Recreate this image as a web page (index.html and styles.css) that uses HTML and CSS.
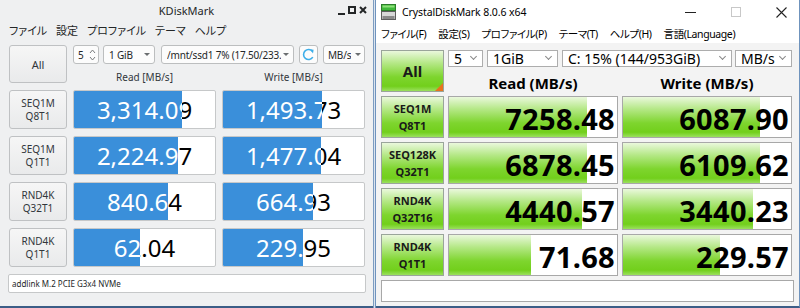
FILE: index.html
```html
<!DOCTYPE html>
<html lang="ja">
<head>
    <meta charset="UTF-8">
    <title>KDiskMark / CrystalDiskMark</title>
    <link rel="stylesheet" href="styles.css">
</head>
<body>
    <!-- KDiskMark window -->
    <div class="kdm">
        <div class="kdm-title">
            <span></span>
            <span class="kdm-name">KDiskMark</span>
            <div class="kdm-ctrl">
                <svg width="7" height="9" viewBox="0 0 7 9"><rect x="0" y="7" width="7" height="2" fill="#232627"/></svg>
                <svg width="8" height="8" viewBox="0 0 8 8"><rect x="1" y="1" width="6" height="6" fill="none" stroke="#232627" stroke-width="2"/></svg>
                <svg width="8" height="8" viewBox="0 0 8 8"><path d="M1 1 L7 7 M7 1 L1 7" stroke="#232627" stroke-width="2"/></svg>
            </div>
        </div>
        <div class="kdm-menu">
            <span>ファイル</span><span>設定</span><span>プロファイル</span><span>テーマ</span><span>ヘルプ</span>
        </div>
        <div class="kdm-body">
            <div class="kbtn kall">All</div>
            <div class="kctrls">
                <div class="kspin">
                    <span>5</span>
                    <svg width="7" height="14" viewBox="0 0 7 14"><path d="M1 5 L3.5 2 L6 5 M1 9 L3.5 12 L6 9" fill="none" stroke="#7a7c7e" stroke-width="1"/></svg>
                </div>
                <div class="kcombo k-size"><span>1 GiB</span><i class="karrow"></i></div>
                <div class="kcombo k-path"><span>/mnt/ssd1 7% (17.50/233.6</span><i class="karrow"></i></div>
                <div class="krefresh">
                    <svg width="13" height="13" viewBox="0 0 13 13"><path d="M10.6 3.6 A5 5 0 1 0 10.8 9.2" fill="none" stroke="#3daee9" stroke-width="1.6"/><path d="M8 1.2 L11.6 1.8 L11 5.4 Z" fill="#3daee9"/></svg>
                </div>
                <div class="kcombo k-unit"><span>MB/s</span><i class="karrow"></i></div>
            </div>
            <div class="khead">Read [MB/s]</div>
            <div class="khead">Write [MB/s]</div>

            <div class="kbtn">SEQ1M<br>Q8T1</div>
            <div class="kbar"><span class="kval">3,314.09</span><div class="kfill" style="width:108px"><span class="kval">3,314.09</span></div></div>
            <div class="kbar"><span class="kval">1,493.73</span><div class="kfill" style="width:99px"><span class="kval">1,493.73</span></div></div>

            <div class="kbtn">SEQ1M<br>Q1T1</div>
            <div class="kbar"><span class="kval">2,224.97</span><div class="kfill" style="width:104px"><span class="kval">2,224.97</span></div></div>
            <div class="kbar"><span class="kval">1,477.04</span><div class="kfill" style="width:98px"><span class="kval">1,477.04</span></div></div>

            <div class="kbtn">RND4K<br>Q32T1</div>
            <div class="kbar"><span class="kval">840.64</span><div class="kfill" style="width:94px"><span class="kval">840.64</span></div></div>
            <div class="kbar"><span class="kval">664.93</span><div class="kfill" style="width:90px"><span class="kval">664.93</span></div></div>

            <div class="kbtn">RND4K<br>Q1T1</div>
            <div class="kbar"><span class="kval">62.04</span><div class="kfill" style="width:66px"><span class="kval">62.04</span></div></div>
            <div class="kbar"><span class="kval">229.95</span><div class="kfill" style="width:80px"><span class="kval">229.95</span></div></div>

            <div class="kdevice">addlink M.2 PCIE G3x4 NVMe</div>
        </div>
    </div>

    <div class="sep"></div>

    <!-- CrystalDiskMark window -->
    <div class="cdm">
        <div class="cdm-title">
            <svg class="cdm-icon" width="15" height="16" viewBox="0 0 15 16">
                <rect x="0.5" y="0.5" width="14" height="6" fill="#3fb83a" stroke="#2c7c2a"/>
                <rect x="1.5" y="1.5" width="12" height="2" fill="#8fe07a"/>
                <rect x="0.5" y="7.5" width="14" height="8" fill="#d8d8d8" stroke="#5e5e5e"/>
                <rect x="1.5" y="12" width="12" height="3" fill="#8a8a8a"/>
            </svg>
            <span class="cdm-name">CrystalDiskMark 8.0.6 x64</span>
            <div class="cdm-ctrl">
                <svg width="11" height="11" viewBox="0 0 11 11"><path d="M0 5.5 H11" stroke="#222" stroke-width="1"/></svg>
                <svg width="10" height="10" viewBox="0 0 10 10"><rect x="0.5" y="0.5" width="9" height="9" fill="none" stroke="#c8c8c8"/></svg>
                <svg width="11" height="11" viewBox="0 0 11 11"><path d="M0.5 0.5 L10.5 10.5 M10.5 0.5 L0.5 10.5" stroke="#222" stroke-width="1.1"/></svg>
            </div>
        </div>
        <div class="cdm-menu">
            <span>ファイル(F)</span><span>設定(S)</span><span>プロファイル(P)</span><span>テーマ(T)</span><span>ヘルプ(H)</span><span>言語(Language)</span>
        </div>
        <div class="cdm-body">
            <div class="cbtn call">All<i class="corner"></i></div>
            <div class="cctrls">
                <div class="ccombo c-count"><span>5</span><i class="chev"></i></div>
                <div class="ccombo c-size"><span>1GiB</span><i class="chev"></i></div>
                <div class="ccombo c-drive"><span>C: 15% (144/953GiB)</span><i class="chev"></i></div>
                <div class="ccombo c-unit"><span>MB/s</span><i class="chev"></i></div>
            </div>
            <div class="chead">Read (MB/s)</div>
            <div class="chead">Write (MB/s)</div>

            <div class="cbtn">SEQ1M<br>Q8T1</div>
            <div class="ccell"><div class="cfill" style="width:138px"></div><span class="cval">7258.48</span></div>
            <div class="ccell"><div class="cfill" style="width:137px"></div><span class="cval">6087.90</span></div>

            <div class="cbtn">SEQ128K<br>Q32T1</div>
            <div class="ccell"><div class="cfill" style="width:138px"></div><span class="cval">6878.45</span></div>
            <div class="ccell"><div class="cfill" style="width:137px"></div><span class="cval">6109.62</span></div>

            <div class="cbtn">RND4K<br>Q32T16</div>
            <div class="ccell"><div class="cfill" style="width:133px"></div><span class="cval">4440.57</span></div>
            <div class="ccell"><div class="cfill" style="width:130px"></div><span class="cval">3440.23</span></div>

            <div class="cbtn">RND4K<br>Q1T1</div>
            <div class="ccell"><div class="cfill" style="width:82px"></div><span class="cval">71.68</span></div>
            <div class="ccell"><div class="cfill" style="width:97px"></div><span class="cval">229.57</span></div>

            <div class="ccomment"></div>
        </div>
    </div>
</body>
</html>
```

FILE: styles.css
```css
body {
    margin: 0;
    display: flex;
    height: 308px;
    overflow: hidden;
    background: #eff0f1;
}

/* ---------- KDiskMark ---------- */
.kdm {
    width: 373px;
    height: 308px;
    box-sizing: border-box;
    background: #eff0f1;
    border-bottom: 2px solid #3c5d86;
    font-family: "Noto Sans", "Noto Sans CJK JP", sans-serif;
    color: #232627;
}
.kdm-title {
    height: 20px;
    display: grid;
    grid-template-columns: 1fr auto 1fr;
    align-items: center;
    font-size: 11px;
}
.kdm-ctrl {
    justify-self: end;
    display: flex;
    align-items: center;
    gap: 3px;
    padding-right: 6px;
}
.kdm-menu {
    height: 19px;
    display: flex;
    align-items: center;
    gap: 9px;
    padding-left: 9px;
    font-size: 11px;
    font-feature-settings: "palt";
}
.kdm-body {
    display: grid;
    grid-template-columns: 58px 143px 143px;
    grid-template-rows: 19px 12px 39px 39px 39px 39px 19px;
    column-gap: 6px;
    row-gap: 7px;
    padding: 6px 0 0 9px;
}
.kbtn {
    box-sizing: border-box;
    border: 1px solid #bfc1c3;
    border-radius: 3px;
    background: linear-gradient(#f6f6f6, #e9eaeb);
    display: flex;
    align-items: center;
    justify-content: center;
    text-align: center;
    font-size: 10px;
    line-height: 13px;
    color: #31363b;
}
.kall {
    grid-row: 1 / 3;
    font-size: 11px;
}
.kctrls {
    grid-column: 2 / 4;
    display: flex;
    font-size: 10px;
    letter-spacing: -0.2px;
}
.kspin, .kcombo, .krefresh {
    box-sizing: border-box;
    height: 19px;
    border: 1px solid #bcbebf;
    border-radius: 3px;
    background: #fcfcfc;
    display: flex;
    align-items: center;
    white-space: nowrap;
    overflow: hidden;
}
.kspin {
    width: 26px;
    padding-left: 4px;
    justify-content: space-between;
    padding-right: 2px;
}
.kcombo {
    padding: 0 4px 0 5px;
    justify-content: space-between;
}
.kcombo span { overflow: hidden; }
.k-size { width: 52px; margin-left: 4px; }
.k-path { width: 133px; margin-left: 6px; }
.krefresh { width: 19px; margin-left: 5px; justify-content: center; }
.k-unit { width: 42px; margin-left: 5px; padding: 0 3px 0 4px; }
.karrow {
    flex: none;
    width: 0;
    height: 0;
    margin-left: 2px;
    border-left: 3px solid transparent;
    border-right: 3px solid transparent;
    border-top: 3px solid #6b6e70;
}
.khead {
    font-size: 10px;
    line-height: 12px;
    text-align: center;
    color: #31363b;
}
.kbar {
    position: relative;
    box-sizing: border-box;
    background: #fff;
    border: 1px solid #c6c8c9;
    border-radius: 2px;
    overflow: hidden;
}
.kval {
    display: block;
    width: 141px;
    text-align: center;
    font-size: 24px;
    line-height: 37px;
    color: #000;
    white-space: nowrap;
}
.kfill {
    position: absolute;
    left: 0;
    top: 0;
    bottom: 0;
    overflow: hidden;
    background: #3a8fda;
}
.kfill .kval { color: #fff; }
.kdevice {
    grid-column: 1 / 4;
    box-sizing: border-box;
    background: #fff;
    border: 1px solid #c6c8c9;
    border-radius: 2px;
    font-size: 8px;
    line-height: 17px;
    padding-left: 3px;
    margin-left: -1px;
    margin-right: -1px;
}

.sep {
    width: 3px;
    height: 308px;
    box-sizing: border-box;
    background: #dbe4ee;
    border-left: 1px solid #7d9cc0;
    border-right: 1px solid #6f93bd;
}

/* ---------- CrystalDiskMark ---------- */
.cdm {
    width: 424px;
    height: 308px;
    box-sizing: border-box;
    background: #f3f3f3;
    border-bottom: 2px solid #3c5d86;
    border-right: 1px solid #6f93bd;
    font-family: "Noto Sans", "Noto Sans CJK JP", sans-serif;
    color: #000;
}
.cdm-title {
    height: 24px;
    background: #fff;
    display: flex;
    align-items: center;
    font-size: 10.5px;
    letter-spacing: -0.1px;
}
.cdm-icon { margin: 0 6px 0 5px; }
.cdm-ctrl {
    margin-left: auto;
    display: flex;
    align-items: center;
    gap: 35px;
    padding-right: 12px;
}
.cdm-menu {
    height: 19px;
    background: #fff;
    display: flex;
    align-items: center;
    gap: 12px;
    padding-left: 5px;
    font-size: 10.5px;
    font-feature-settings: "palt";
    letter-spacing: -0.4px;
}
.cdm-body {
    display: grid;
    grid-template-columns: 63px 170px 170px;
    grid-template-rows: 17px 21px 42px 42px 42px 42px 22px;
    gap: 4px;
    padding: 7px 0 0 5px;
}
.cbtn {
    box-sizing: border-box;
    border: 1px solid #9aa59a;
    background: linear-gradient(#eaf8dc 0%, #b5e887 30%, #7ed52e 65%, #72cf1c 88%, #9be05e 100%);
    display: flex;
    align-items: center;
    justify-content: center;
    text-align: center;
    font-size: 11px;
    font-weight: bold;
    line-height: 17px;
    color: #1a1a1a;
}
.call {
    grid-row: 1 / 3;
    position: relative;
    font-size: 15px;
}
.corner {
    position: absolute;
    right: 0;
    bottom: 0;
    width: 0;
    height: 0;
    border-left: 8px solid transparent;
    border-bottom: 8px solid #e8731e;
}
.cctrls {
    grid-column: 2 / 4;
    display: flex;
    gap: 4px;
    font-size: 14px;
}
.ccombo {
    box-sizing: border-box;
    height: 17px;
    background: #fff;
    border: 1px solid #adadad;
    display: flex;
    align-items: center;
    justify-content: space-between;
    padding: 0 6px 0 5px;
    white-space: nowrap;
}
.c-count { width: 35px; }
.c-size { width: 71px; }
.c-drive { width: 170px; }
.c-unit { width: 57px; margin-left: -1px; }
.chev {
    width: 4px;
    height: 4px;
    border-right: 1px solid #888;
    border-bottom: 1px solid #888;
    transform: translateY(-2px) rotate(45deg);
}
.chead {
    font-size: 15px;
    font-weight: bold;
    text-align: center;
    line-height: 21px;
    padding-top: 2px;
}
.ccell {
    position: relative;
    box-sizing: border-box;
    background: #fff;
    border: 1px solid #a8a8a8;
    display: flex;
    align-items: center;
    justify-content: flex-end;
}
.cfill {
    position: absolute;
    left: 0;
    top: 0;
    bottom: 0;
    background: linear-gradient(#eaf8dc 0%, #b5e887 30%, #7ed52e 65%, #72cf1c 88%, #9be05e 100%);
}
.cval {
    position: relative;
    font-size: 29px;
    font-weight: bold;
    padding: 3px 2px 0 0;
    letter-spacing: 0.3px;
}
.ccomment {
    grid-column: 1 / 4;
    background: #fff;
    border: 1px solid #a8a8a8;
    margin-right: -2px;
}
```
